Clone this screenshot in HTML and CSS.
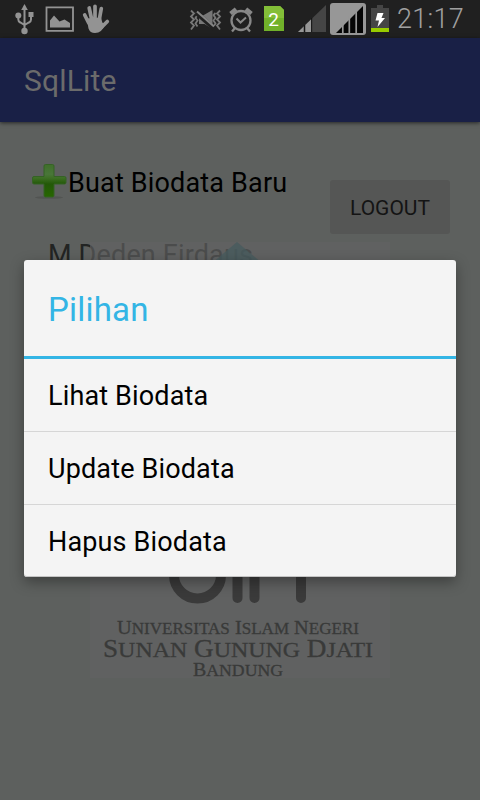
FILE: index.html
```html
<!DOCTYPE html>
<html lang="id">
<head>
<meta charset="utf-8">
<title>SqlLite</title>
<link rel="stylesheet" href="styles.css">
</head>
<body>
<div class="screen">
  <header class="status">
    <svg class="status-icons" width="394" height="38" viewBox="0 0 394 38">
      <g fill="#939393" stroke="none">
        <path d="M24.500 4l3.300 6h-6.600z"/>
        <circle cx="18.300" cy="15.500" r="3"/>
        <path d="M28.500 12h5v5h-5z"/>
        <circle cx="24.500" cy="31" r="3.200"/>
      </g>
      <path d="M24.500 9v21M18.300 16v3.500q0 2 2 3l4.200 2.500M31 16v3.500q0 2-2 3l-4.500 2.500" fill="none" stroke="#939393" stroke-width="2"/>
      <path d="M46.500 7.300h26.500v23.500H46.500z" fill="none" stroke="#939393" stroke-width="1.800"/>
      <path d="M50 27.500v-7l4-5 5.500 6 5-2 5.500 3.500v4.500z" fill="#939393"/>
      <g fill="none" stroke="#939393" stroke-width="3.700" stroke-linecap="round">
        <path d="M84.700 15l4 8M89.200 8l2.400 11M95 6.300v12M101.300 8.500l-2 11M107.300 21.500l-6 6"/>
      </g>
      <path d="M86.700 18.500l14.300-1 1.300 5 2.700 2q-3 8.500-10 8.500-5 0-6.500-4.500z" fill="#939393"/>
      <g fill="none" stroke="#777" stroke-width="1.800">
        <path d="M191 10.500l3 3-3 3 3 3-3 3 3 3-3 4M195.500 13l2 2-2 3 2 2.500-2 3 2 3M220 10.500l-3 3 3 3-3 3 3 3-3 3 3 4M215.500 13l-2 2 2 3-2 2.500 2 3-2 3"/>
      </g>
      <path d="M199 15.500h4l9.500-5.500v19l-8-5h-5.500z" fill="#777"/>
      <path d="M196 12.500l18 16" stroke="#202020" stroke-width="4.500"/>
      <path d="M197 11.500l17 15" stroke="#858585" stroke-width="2"/>
      <g fill="none" stroke="#888" stroke-width="2.300">
        <circle cx="241" cy="20.500" r="9.500"/>
        <path d="M236.500 18.500l4 4 5.500-5" stroke-width="2"/>
        <path d="M235 28l-3 3.500M247 28l3 3.500"/>
        <path d="M230.500 13.500l5.500-4.500M251.500 13.500L246 9" stroke-width="4"/>
      </g>
      <path d="M264 6h16l4 4v21h-20z" fill="#71b12a"/>
      <path d="M264 6h16l4 4v8h-20z" fill="#83be38"/>
      <text x="273.500" y="26" text-anchor="middle" class="sim">2</text>
      <path d="M298 32L326 5v27z" fill="#454545"/>
      <path d="M298 32l14.500-14v14z" fill="#969696"/>
      <path d="M304.500 25v7M311.800 18v14" stroke="#151515" stroke-width="1.500"/>
      <rect x="330" y="3" width="36" height="32" rx="3" fill="#979797"/>
      <path d="M336 33L363 6v27z" fill="#050505"/>
      <path d="M342.800 22v11M349.300 16v17M356.200 10v23" stroke="#979797" stroke-width="1.700"/>
      <path d="M377 5h6v3h6v20h-18V8h6z" fill="#454545"/>
      <path d="M371 28h18v4h-18z" fill="#99cc00"/>
      <path d="M377.500 13h6l-2 5h3.500l-7.500 9 1.500-6.500h-3.500z" fill="#fff"/>
    </svg>
    <span class="clock">21:17</span>
  </header>
  <div class="appbar"><span class="app-title">SqlLite</span></div>
  <main class="content">
    <div class="top-row">
      <div class="create">
        <svg width="38" height="38" viewBox="0 0 38 38">
          <defs><linearGradient id="plus" x1="0" y1="0" x2="0" y2="1">
            <stop offset="0" stop-color="#3f6f2a"/><stop offset=".3" stop-color="#497639"/><stop offset=".42" stop-color="#3d6f24"/><stop offset=".6" stop-color="#235808"/><stop offset="1" stop-color="#276700"/>
          </linearGradient></defs>
          <ellipse cx="19" cy="35.500" rx="14" ry="1.300" fill="#525452"/>
          <path d="M15.500 2.500h7q1.500 0 1.500 1.500V14.500H34.500q1.500 0 1.500 1.500V20.500q0 1.500-1.500 1.500H24V33.500q0 1.500-1.500 1.500h-7q-1.500 0-1.500-1.500V22H4Q2.500 22 2.500 20.500v-4.500Q2.500 14.500 4 14.500h10V4Q14 2.500 15.500 2.500z" fill="url(#plus)" stroke="#356225" stroke-width="1"/>
        </svg>
        <span class="create-label">Buat Biodata Baru</span>
      </div>
      <button class="logout">LOGOUT</button>
    </div>
    <div class="name">M Deden Firdaus</div>
    <svg class="logo" width="300" height="436" viewBox="0 0 300 436">
      <rect width="300" height="436" fill="#626262" fill-opacity=".65"/>
      <path d="M147 0l38 32h-76z" fill="#465b5d" fill-opacity=".75"/>
      <g fill="none" stroke="#3a3a3a" stroke-width="10" stroke-linecap="round">
        <path d="M84 320v13a23.500 23.500 0 0 0 47 0v-13M147.500 320v36M164.500 320v36M211 320v36"/>
      </g>
      <g class="logo-text">
        <text x="27" y="391.500" font-size="19" textLength="242" lengthAdjust="spacingAndGlyphs">U<tspan font-size="16">NIVERSITAS</tspan> I<tspan font-size="16">SLAM</tspan> N<tspan font-size="16">EGERI</tspan></text>
        <text x="13" y="414.500" font-size="25" textLength="270" lengthAdjust="spacingAndGlyphs">S<tspan font-size="22">UNAN</tspan> G<tspan font-size="22">UNUNG</tspan> D<tspan font-size="22">JATI</tspan></text>
        <text x="103" y="434" font-size="18" textLength="90" lengthAdjust="spacingAndGlyphs">B<tspan font-size="16">ANDUNG</tspan></text>
      </g>
    </svg>
  </main>
  <section class="dialog">
    <h1>Pilihan</h1>
    <ul>
      <li>Lihat Biodata</li>
      <li>Update Biodata</li>
      <li>Hapus Biodata</li>
    </ul>
  </section>
</div>
</body>
</html>
```
FILE: styles.css
```css
* { box-sizing: border-box; }
body { margin: 0; font-family: Roboto, "Liberation Sans", sans-serif; }
.screen {
  position: relative;
  display: flex;
  flex-direction: column;
  width: 480px;
  height: 800px;
  overflow: hidden;
  background: #5d605e;
}
.status {
  display: flex;
  align-items: center;
  height: 38px;
  flex: none;
  background: #202020;
}
.status-icons { flex: none; }
.sim {
  font: 400 19px Roboto, sans-serif;
  fill: #fff;
}
.clock {
  margin-left: 3px;
  font-size: 27px;
  font-weight: 300;
  letter-spacing: .3px;
  line-height: 38px;
  color: #a0a0a0;
  white-space: nowrap;
}
.appbar {
  display: flex;
  align-items: center;
  height: 84px;
  flex: none;
  padding: 2px 24px 0;
  background: #192046;
  box-shadow: 0 1px 4px rgba(0, 0, 0, .6);
}
.app-title {
  font-size: 30px;
  line-height: 36px;
  letter-spacing: .2px;
  color: #6b6b6b;
}
.content {
  position: relative;
  flex: 1;
  padding: 40px 30px 0;
}
.top-row {
  display: flex;
  justify-content: space-between;
  align-items: flex-start;
  height: 72px;
}
.create { display: flex; }
.create-label {
  font-size: 27px;
  line-height: 42px;
  letter-spacing: .17px;
  white-space: nowrap;
  color: #000;
}
.logout {
  width: 120px;
  height: 54px;
  margin: 18px 0 0;
  padding: 2px 0 0;
  border: 0;
  border-radius: 3px;
  background: #555655;
  font: 21px Roboto, sans-serif;
  color: #141414;
}
.name {
  padding: 5px 18px;
  font-size: 27px;
  line-height: 32px;
  letter-spacing: .17px;
  white-space: nowrap;
  color: #222423;
}
.logo {
  position: absolute;
  left: 90px;
  top: 120px;
  overflow: visible;
}
.logo-text {
  font-family: "Liberation Serif", serif;
  font-weight: 400;
  fill: #393a39;
  stroke: #393a39;
  stroke-width: .3px;
}
.dialog {
  position: absolute;
  left: 24px;
  top: 260px;
  width: 432px;
  height: 317px;
  border-radius: 3px;
  background: #f4f4f4;
  box-shadow: 0 5px 14px rgba(0, 0, 0, .35), inset 0 -1px 0 #c4c4c4;
}
.dialog h1 {
  height: 99px;
  margin: 0;
  padding: 2px 24px 0;
  border-bottom: 3px solid #33b5e5;
  font-size: 33px;
  font-weight: 400;
  letter-spacing: .2px;
  line-height: 96px;
  color: #33b5e5;
}
.dialog ul { margin: 0; padding: 0; list-style: none; }
.dialog li {
  height: 73px;
  padding: 1px 24px 0;
  border-bottom: 1px solid #d6d6d6;
  font-size: 27px;
  letter-spacing: .15px;
  line-height: 72px;
  color: #000;
}
.dialog li:last-child { border-bottom: 0; }
```
